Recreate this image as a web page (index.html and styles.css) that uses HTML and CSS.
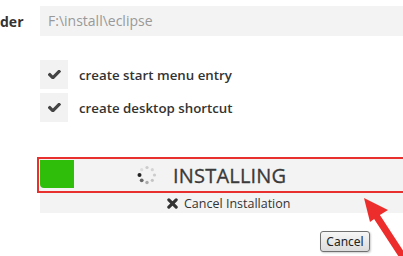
FILE: index.html
```html
<!DOCTYPE html>
<html lang="en">
<head>
    <meta charset="UTF-8">
    <meta name="viewport" content="width=device-width, initial-scale=1.0">
    <title>Installer</title>
    <link rel="stylesheet" href="styles.css">
</head>
<body>

<div class="page">
    <div class="folder-row">
        <span class="folder-label">der</span>
        <div class="folder-input">F:\install\eclipse</div>
    </div>

    <div class="options">
        <div class="option">
            <span class="check">
                <svg width="13" height="9" viewBox="141 402 1530 1024"><path d="M1671 566q0 40-28 68l-724 724-136 136q-28 28-68 28t-68-28l-136-136-362-362q-28-28-28-68t28-68l136-136q28-28 68-28t68 28l294 295 656-657q28-28 68-28t68 28l136 136q28 28 28 68z" fill="#444"/></svg>
            </span>
            <span class="option-label">create start menu entry</span>
        </div>
        <div class="option">
            <span class="check">
                <svg width="13" height="9" viewBox="141 402 1530 1024"><path d="M1671 566q0 40-28 68l-724 724-136 136q-28 28-68 28t-68-28l-136-136-362-362q-28-28-28-68t28-68l136-136q28-28 68-28t68 28l294 295 656-657q28-28 68-28t68 28l136 136q28 28 28 68z" fill="#444"/></svg>
            </span>
            <span class="option-label">create desktop shortcut</span>
        </div>
    </div>

    <div class="progress-panel">
        <div class="progress-bar">
            <div class="progress-fill" style="width: 34px;"></div>
            <svg class="spinner" width="20" height="20" viewBox="0 0 20 20">
                <circle cx="10" cy="2.5" r="1.6" fill="#ccc"/>
                <circle cx="15.3" cy="4.7" r="1.6" fill="#d4d4d4"/>
                <circle cx="17.5" cy="10" r="1.6" fill="#ccc"/>
                <circle cx="15.3" cy="15.3" r="1.6" fill="#c4c4c4"/>
                <circle cx="10" cy="17.5" r="1.7" fill="#aaa"/>
                <circle cx="4.7" cy="15.3" r="1.9" fill="#666"/>
                <circle cx="2.5" cy="10" r="2" fill="#222"/>
                <circle cx="4.7" cy="4.7" r="1.6" fill="#ddd"/>
            </svg>
            <span class="progress-text">INSTALLING</span>
        </div>
        <div class="cancel-row">
            <svg width="11" height="11" viewBox="0 0 12 12"><path d="M2 2 L10 10 M10 2 L2 10" stroke="#333" stroke-width="3.4" stroke-linecap="round"/></svg>
            <span>Cancel Installation</span>
        </div>
    </div>

    <div class="footer">
        <button class="cancel-btn">Cancel</button>
    </div>

    <div class="highlight"></div>
    <svg class="arrow" width="48" height="66" viewBox="0 0 48 66">
        <path d="M9 8 L33 20 L24.9 25.1 L52.9 68.1 L47.1 71.9 L19.1 28.9 L15 32 Z" fill="#ec2d2b"/>
    </svg>
</div>

</body>
</html>
```

FILE: styles.css
```css
body {
    font-family: "Open Sans", Arial, sans-serif;
    margin: 0;
    padding: 0;
    background-color: #fff;
    overflow: hidden;
}
.page {
    position: relative;
    width: 403px;
    height: 256px;
    padding-top: 6px;
    box-sizing: border-box;
    overflow: hidden;
}
.folder-row {
    display: flex;
    align-items: center;
    height: 30px;
}
.folder-label {
    width: 40px;
    flex-shrink: 0;
    font-size: 14px;
    font-weight: 700;
    color: #333;
}
.folder-input {
    width: 380px;
    flex-shrink: 0;
    height: 30px;
    line-height: 30px;
    padding-left: 8px;
    background-color: #f3f3f3;
    font-size: 14px;
    color: #999;
}
.options {
    margin: 24px 0 0 40px;
    display: flex;
    flex-direction: column;
    gap: 4px;
}
.option {
    display: flex;
    align-items: center;
    gap: 11px;
}
.check {
    width: 28px;
    height: 29px;
    background-color: #f2f2f2;
    display: flex;
    align-items: center;
    justify-content: center;
}
.option-label {
    font-size: 13.3px;
    font-weight: 600;
    color: #333;
}
.progress-panel {
    margin: 35px 0 0 40px;
    width: 380px;
    background-color: #f3f3f3;
}
.progress-bar {
    position: relative;
    height: 36px;
    display: flex;
    align-items: center;
    padding-left: 97px;
    gap: 16px;
}
.progress-fill {
    position: absolute;
    left: 0;
    top: 3px;
    height: 28px;
    background-color: #2fbf0a;
    border-radius: 0 0 0 4px;
}
.progress-text {
    font-size: 20px;
    color: #3a3a3a;
    letter-spacing: 0.2px;
    -webkit-text-stroke: 0.3px #3a3a3a;
}
.cancel-row {
    height: 20px;
    display: flex;
    align-items: center;
    gap: 6px;
    padding-left: 127px;
    font-size: 12.5px;
    color: #333;
}
.footer {
    margin: 16px 0 0 320px;
}
.cancel-btn {
    width: 50px;
    height: 21px;
    padding: 0;
    font-family: "Noto Sans", "DejaVu Sans", sans-serif;
    font-size: 12px;
    color: #222;
    border: 1px solid #707070;
    border-radius: 3px;
    background: linear-gradient(#f6f6f6, #dcdcdc);
    box-shadow: 1px 1px 2px rgba(0, 0, 0, 0.2);
}
.highlight {
    position: absolute;
    left: 37px;
    top: 157px;
    width: 380px;
    height: 36px;
    box-sizing: border-box;
    border: 2px solid #e8302f;
}
.arrow {
    position: absolute;
    left: 355px;
    top: 190px;
}
```
